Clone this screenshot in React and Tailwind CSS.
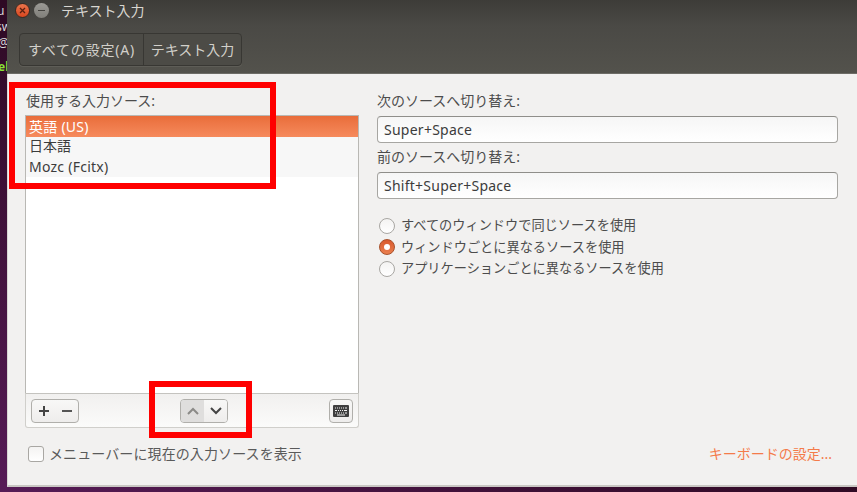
import React from 'react';

const font = { fontFamily: '"Noto Sans", "Noto Sans CJK JP", sans-serif' };

const RadioRow = ({ label, checked }) => (
  <div className="flex items-center h-[21.5px]">
    {checked ? (
      <span className="w-4 h-4 rounded-full border border-[#a8502a] bg-gradient-to-b from-[#d9582c] to-[#ea7f4e] flex items-center justify-center">
        <span className="w-[6px] h-[6px] rounded-full bg-white" />
      </span>
    ) : (
      <span className="w-4 h-4 rounded-full border border-[#a9a7a3] bg-gradient-to-b from-[#f4f3f2] to-white" />
    )}
    <span className="ml-[6px] text-[13.2px] leading-none text-[#4c4c4c]">{label}</span>
  </div>
);

const ShortcutField = ({ value }) => (
  <div className="h-[27px] shrink-0 rounded-[4px] border border-[#a7a6a2] border-t-[#8f8e8a] bg-gradient-to-b from-[#f6f6f6] to-white flex items-center px-[6px] text-[14px] tracking-[0.25px] text-[#3c3c3c]">
    {value}
  </div>
);

const App = () => {
  return (
    <div className="relative w-[857px] h-[492px] overflow-hidden bg-[#300a24] flex flex-col" style={font}>
      <div className="flex h-[487px] shrink-0">
        {/* terminal behind the window */}
        <div className="w-[7px] shrink-0 bg-gradient-to-b from-[#2e0a24] to-[#561b56] text-[12px] leading-[16px] text-[#d8d8d8] overflow-hidden whitespace-nowrap pt-[3px]">
          <div className="-ml-[3px]">u</div>
          <div className="-ml-[4px]">sw</div>
          <div className="-ml-[2px]">@</div>
          <div className="h-[8px]" />
          <div className="-ml-[2px] text-[#8ae234] font-bold">el</div>
        </div>

        <div className="flex-1 flex flex-col min-w-0">
          {/* title bar */}
          <div className="h-[25px] shrink-0 bg-gradient-to-b from-[#3d3c38] to-[#4a4945] flex items-center pl-[8px] pb-[4px] text-[#d8d6d0] text-[14px]">
            <span className="w-[15px] h-[15px] rounded-full bg-gradient-to-b from-[#e8734a] to-[#d9461e] border border-[#3a2a22] flex items-center justify-center">
              <svg width="7" height="7" viewBox="0 0 7 7"><path d="M1 1l5 5M6 1L1 6" stroke="#5a2010" strokeWidth="1.3" /></svg>
            </span>
            <span className="ml-[4px] w-[15px] h-[15px] rounded-full bg-gradient-to-b from-[#9b9a95] to-[#807f7a] flex items-center justify-center">
              <span className="w-[7px] h-px bg-[#44433f]" />
            </span>
            <span className="ml-[12px]">テキスト入力</span>
          </div>

          {/* toolbar */}
          <div className="h-[49px] shrink-0 bg-gradient-to-b from-[#4a4945] to-[#53524c] flex items-center pl-[12px] pt-[1px] border-b border-[#6d6c66]">
            <div className="flex h-[33px] rounded-[4px] border border-[#383733] bg-[#4c4b46] text-[14px] text-[#d2d0ca] shadow-[0_1px_0_#5e5d57]">
              <div className="w-[124px] flex items-center justify-center pb-px border-r border-[#383733] tracking-[0.8px]">すべての設定(A)</div>
              <div className="w-[97px] flex items-center justify-center pb-px">テキスト入力</div>
            </div>
          </div>

          {/* body */}
          <div className="flex-1 bg-[#f2f1f0] border-l border-[#d8d6d3] border-b-2 border-b-[#c9c7c3] flex flex-col">
            <div className="flex-1 flex pl-[17px] pt-[15px]">
              {/* left column */}
              <div className="w-[334px] flex flex-col">
                <div className="h-[26px] pl-px text-[14px] leading-[24px] text-[#4c4c4c]">使用する入力ソース:</div>
                <div className="h-[278px] bg-white border border-b-0 border-[#b9b8b4] text-[14px] text-[#3c3c3c]">
                  <div className="h-[21px] bg-gradient-to-b from-[#e96d3a] to-[#f68a5c] text-white flex items-center pl-[3px] tracking-[0.25px]">英語 (US)</div>
                  <div className="h-[20px] bg-[#f7f7f7] flex items-center pl-[3px] pb-[3px]">日本語</div>
                  <div className="h-[20px] bg-[#f7f7f7] flex items-center pl-[3px] pb-[2px] tracking-[0.25px]">Mozc (Fcitx)</div>
                </div>
                <div className="h-[35px] border border-[#d0cfcb] border-t-[#c4c3bf] rounded-b-[3px] bg-gradient-to-b from-[#f1f0ef] to-[#fbfbfa] flex items-center pl-[5px] pr-[5px]">
                  <div className="flex w-[48px] h-[24px] rounded-[4px] border border-[#b0afab] bg-gradient-to-b from-[#f8f8f7] to-[#eeedec]">
                    <span className="w-[23px] flex items-center justify-center">
                      <svg width="12" height="12" viewBox="0 0 12 12"><path d="M6 1v10M1 6h10" stroke="#444" strokeWidth="2" /></svg>
                    </span>
                    <span className="w-[23px] flex items-center justify-center">
                      <svg width="12" height="12" viewBox="0 0 12 12"><path d="M1 6h10" stroke="#555" strokeWidth="2" /></svg>
                    </span>
                  </div>
                  <div className="flex w-[48px] h-[24px] rounded-[4px] border border-[#b0afab] overflow-hidden ml-[101px]">
                    <span className="w-[23px] bg-[#dfdedd] flex items-center justify-center">
                      <svg width="12" height="8" viewBox="0 0 12 8"><path d="M1 7l5-5 5 5" fill="none" stroke="#8b8a87" strokeWidth="2" /></svg>
                    </span>
                    <span className="flex-1 bg-gradient-to-b from-[#f8f8f7] to-[#eeedec] flex items-center justify-center">
                      <svg width="12" height="8" viewBox="0 0 12 8"><path d="M1 1l5 5 5-5" fill="none" stroke="#444" strokeWidth="2" /></svg>
                    </span>
                  </div>
                  <div className="ml-auto w-[24px] h-[24px] rounded-[4px] border border-[#b0afab] bg-gradient-to-b from-[#f8f8f7] to-[#eeedec] flex items-center justify-center">
                    <svg width="16" height="12" viewBox="0 0 16 12">
                      <rect width="16" height="12" rx="1" fill="#3f3f3f" />
                      <path d="M2 3h1M4 3h1M6 3h1M8 3h1M10 3h1M12 3h2M2 5.5h2M5 5.5h1M7 5.5h1M9 5.5h1M11 5.5h3M2 8h1M4 8h1M6 8h1M8 8h1M10 8h1M12 8h2M4 10h8" stroke="#f2f2f2" strokeWidth="1" />
                    </svg>
                  </div>
                </div>
              </div>

              {/* right column */}
              <div className="w-[461px] ml-[18px] flex flex-col">
                <div className="h-[27px] text-[14px] leading-[24px] text-[#4c4c4c]">次のソースへ切り替え:</div>
                <ShortcutField value="Super+Space" />
                <div className="h-[29px] text-[14px] leading-[27px] text-[#4c4c4c]">前のソースへ切り替え:</div>
                <ShortcutField value="Shift+Super+Space" />
                <div className="pt-[16px] pl-[2px]">
                  <RadioRow label="すべてのウィンドウで同じソースを使用" />
                  <RadioRow label="ウィンドウごとに異なるソースを使用" checked />
                  <RadioRow label="アプリケーションごとに異なるソースを使用" />
                </div>
              </div>
            </div>

            {/* footer */}
            <div className="h-[56px] flex items-start justify-between pl-[20px] pt-[17px] pr-[25px]">
              <div className="flex items-center">
                <span className="w-[16px] h-[16px] rounded-[3px] border border-[#a9a7a3] bg-gradient-to-b from-[#f4f3f2] to-white" />
                <span className="ml-[5px] text-[14px] leading-none tracking-[0.1px] text-[#5a5a5a]">メニューバーに現在の入力ソースを表示</span>
              </div>
              <span className="text-[14px] leading-[15px] text-[#f47b4a]">キーボードの設定...</span>
            </div>
          </div>
        </div>
      </div>
      <div className="flex-1 bg-gradient-to-r from-[#561b56] to-[#300a24]" />

      {/* red annotation boxes drawn over the screenshot */}
      <div className="absolute left-[9px] top-[82px] w-[267px] h-[107px] border-[6px] border-[#ff0000]" />
      <div className="absolute left-[149px] top-[381px] w-[103px] h-[57px] border-[6px] border-[#ff0000]" />
    </div>
  );
};

export default App;
